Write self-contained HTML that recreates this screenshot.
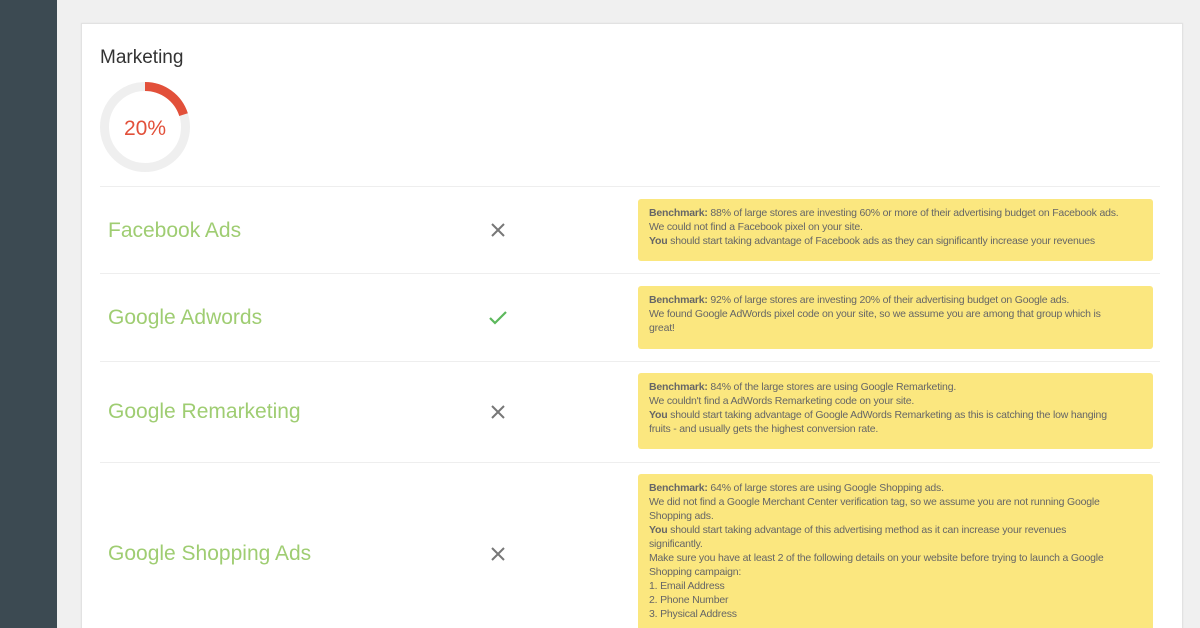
<!DOCTYPE html>
<html style="width:1200px;height:628px;overflow:hidden"><head><style>
body{margin:0;width:1200px;height:628px;overflow:hidden;background:#f0f0f0;font-family:"Liberation Sans",sans-serif;position:relative}
.side{position:absolute;left:0;top:0;width:57px;height:628px;background:#3c4a52}
.card{position:absolute;left:81px;top:23px;width:1100px;height:620px;background:#fff;border:1px solid #e2e2e2;box-shadow:0 0 2px rgba(0,0,0,.06)}
.title{position:absolute;left:100px;top:47px;font-size:19px;color:#333}
.sep{position:absolute;left:100px;width:1060px;height:1px;background:#eee}
.lbl{position:absolute;left:108px;font-size:21px;color:#9fcd72}
.ic{position:absolute;left:489px}
.box{position:absolute;left:638px;width:493px;background:#fbe77f;border-radius:3px;padding:7px 11px;font-size:10.5px;letter-spacing:-0.2px;line-height:14px;color:#666;white-space:nowrap}
.box b{color:#666}
</style></head><body>
<div class="side"></div>
<div class="card"></div>
<div class="title">Marketing</div>
<svg style="position:absolute;left:100px;top:82px" width="90" height="90" viewBox="0 0 90 90">
<circle cx="45" cy="45" r="40.5" fill="none" stroke="#efefef" stroke-width="9"/>
<circle cx="45" cy="45" r="40.5" fill="none" stroke="#e2503a" stroke-width="9" stroke-dasharray="50.9 300" transform="rotate(-90 45 45)"/>
<text x="45" y="53" text-anchor="middle" font-family="Liberation Sans" font-size="21" fill="#e2503a">20%</text>
</svg>
<div class="sep" style="top:186px"></div>
<div class="sep" style="top:273px"></div>
<div class="sep" style="top:361px"></div>
<div class="sep" style="top:462px"></div>

<div class="lbl" style="top:219px">Facebook Ads</div>
<div class="lbl" style="top:306px">Google Adwords</div>
<div class="lbl" style="top:400px">Google Remarketing</div>
<div class="lbl" style="top:542px">Google Shopping Ads</div>

<svg class="ic" style="top:221px" width="18" height="18"><path d="M3 3L15 15M15 3L3 15" stroke="#777" stroke-width="2"/></svg>
<svg class="ic" style="top:309px" width="18" height="18"><path d="M1 9L6 14L17 3" stroke="#5cb85c" stroke-width="2.2" fill="none"/></svg>
<svg class="ic" style="top:403px" width="18" height="18"><path d="M3 3L15 15M15 3L3 15" stroke="#777" stroke-width="2"/></svg>
<svg class="ic" style="top:545px" width="18" height="18"><path d="M3 3L15 15M15 3L3 15" stroke="#777" stroke-width="2"/></svg>

<div class="box" style="top:199px;height:48px"><b>Benchmark:</b> 88% of large stores are investing 60% or more of their advertising budget on Facebook ads.<br>We could not find a Facebook pixel on your site.<br><b>You</b> should start taking advantage of Facebook ads as they can significantly increase your revenues</div>
<div class="box" style="top:286px;height:49px"><b>Benchmark:</b> 92% of large stores are investing 20% of their advertising budget on Google ads.<br>We found Google AdWords pixel code on your site, so we assume you are among that group which is<br>great!</div>
<div class="box" style="top:373px;height:62px"><b>Benchmark:</b> 84% of the large stores are using Google Remarketing.<br>We couldn't find a AdWords Remarketing code on your site.<br><b>You</b> should start taking advantage of Google AdWords Remarketing as this is catching the low hanging<br>fruits - and usually gets the highest conversion rate.</div>
<div class="box" style="top:474px;height:160px"><b>Benchmark:</b> 64% of large stores are using Google Shopping ads.<br>We did not find a Google Merchant Center verification tag, so we assume you are not running Google<br>Shopping ads.<br><b>You</b> should start taking advantage of this advertising method as it can increase your revenues<br>significantly.<br>Make sure you have at least 2 of the following details on your website before trying to launch a Google<br>Shopping campaign:<br>1. Email Address<br>2. Phone Number<br>3. Physical Address</div>
</body></html>
